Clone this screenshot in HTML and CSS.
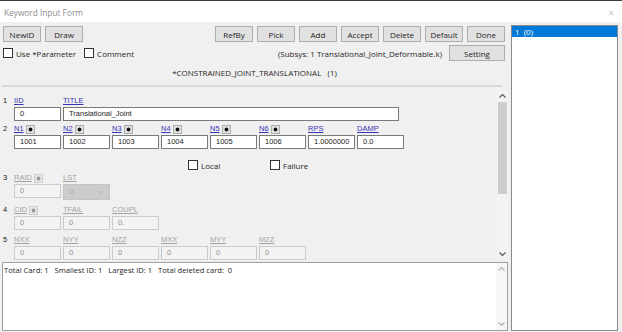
FILE: index.html
```html
<!DOCTYPE html>
<html>
<head>
<meta charset="utf-8">
<title>Keyword Input Form</title>
<link rel="stylesheet" href="styles.css">
</head>
<body>
<div class="window">
  <div class="titlebar">
    <span class="title">Keyword Input Form</span>
    <span class="close">&#x2715;</span>
  </div>
  <div class="body">
    <div class="main">
      <div class="toolbar">
        <span class="btn">NewID</span>
        <span class="btn">Draw</span>
        <span class="spacer"></span>
        <span class="btn">RefBy</span>
        <span class="btn">Pick</span>
        <span class="btn">Add</span>
        <span class="btn">Accept</span>
        <span class="btn">Delete</span>
        <span class="btn">Default</span>
        <span class="btn">Done</span>
      </div>
      <div class="options">
        <span class="chk"><span class="box"></span>Use *Parameter</span>
        <span class="chk"><span class="box"></span>Comment</span>
        <span class="spacer"></span>
        <span class="subsys">(Subsys: 1 Translational_Joint_Deformable.k)</span>
        <span class="btn setting">Setting</span>
      </div>
      <div class="heading">*CONSTRAINED_JOINT_TRANSLATIONAL&nbsp;&nbsp;&nbsp;(1)</div>
      <div class="sep"></div>
      <div class="panel">
        <div class="cards">
          <div class="card first">
            <span class="num">1</span>
            <div class="cell"><span class="lbl">IID</span><span class="fld">0</span></div>
            <div class="cell wide"><span class="lbl">TITLE</span><span class="fld title-fld">Translational_Joint</span></div>
          </div>
          <div class="card">
            <span class="num">2</span>
            <div class="cell"><span class="lbl">N1<span class="dot"></span></span><span class="fld">1001</span></div>
            <div class="cell"><span class="lbl">N2<span class="dot"></span></span><span class="fld">1002</span></div>
            <div class="cell"><span class="lbl">N3<span class="dot"></span></span><span class="fld">1003</span></div>
            <div class="cell"><span class="lbl">N4<span class="dot"></span></span><span class="fld">1004</span></div>
            <div class="cell"><span class="lbl">N5<span class="dot"></span></span><span class="fld">1005</span></div>
            <div class="cell"><span class="lbl">N6<span class="dot"></span></span><span class="fld">1006</span></div>
            <div class="cell"><span class="lbl">RPS</span><span class="fld">1.0000000</span></div>
            <div class="cell"><span class="lbl">DAMP</span><span class="fld">0.0</span></div>
          </div>
          <div class="flags">
            <span class="chk"><span class="box"></span>Local</span>
            <span class="chk"><span class="box"></span>Failure</span>
          </div>
          <div class="card dis">
            <span class="num">3</span>
            <div class="cell"><span class="lbl">RAID<span class="dot"></span></span><span class="fld">0</span></div>
            <div class="cell"><span class="lbl">LST</span><span class="fld sel">0<svg class="caret" viewBox="0 0 8 5" width="8" height="5"><polyline points="1,1 4,4 7,1" fill="none" stroke="#b5b5b5" stroke-width="1"/></svg></span></div>
          </div>
          <div class="card dis">
            <span class="num">4</span>
            <div class="cell"><span class="lbl">CID<span class="dot"></span></span><span class="fld">0</span></div>
            <div class="cell"><span class="lbl">TFAIL</span><span class="fld">0</span></div>
            <div class="cell"><span class="lbl">COUPL</span><span class="fld">0.</span></div>
          </div>
          <div class="card dis">
            <span class="num">5</span>
            <div class="cell"><span class="lbl">NXX</span><span class="fld">0</span></div>
            <div class="cell"><span class="lbl">NYY</span><span class="fld">0</span></div>
            <div class="cell"><span class="lbl">NZZ</span><span class="fld">0</span></div>
            <div class="cell"><span class="lbl">MXX</span><span class="fld">0</span></div>
            <div class="cell"><span class="lbl">MYY</span><span class="fld">0</span></div>
            <div class="cell"><span class="lbl">MZZ</span><span class="fld">0</span></div>
          </div>
        </div>
        <div class="vscroll">
          <span class="arrow"><svg viewBox="0 0 7 4" width="7" height="4"><polyline points="0.5,3.5 3.5,0.5 6.5,3.5" fill="none" stroke="#555" stroke-width="1.1"/></svg></span>
          <span class="thumb"></span>
          <span class="track"></span>
          <span class="arrow"><svg viewBox="0 0 7 4" width="7" height="4"><polyline points="0.5,0.5 3.5,3.5 6.5,0.5" fill="none" stroke="#555" stroke-width="1.1"/></svg></span>
        </div>
      </div>
      <div class="log">
        <div class="logtext">Total Card: 1   Smallest ID: 1   Largest ID: 1   Total deleted card:  0</div>
        <div class="vscroll light">
          <span class="arrow"><svg viewBox="0 0 7 4" width="7" height="4"><polyline points="0.5,3.5 3.5,0.5 6.5,3.5" fill="none" stroke="#b0b0b0" stroke-width="1.1"/></svg></span>
          <span class="track"></span>
          <span class="arrow"><svg viewBox="0 0 7 4" width="7" height="4"><polyline points="0.5,0.5 3.5,3.5 6.5,0.5" fill="none" stroke="#b0b0b0" stroke-width="1.1"/></svg></span>
        </div>
      </div>
    </div>
    <div class="side">
      <div class="listbox">
        <div class="item selected">1&nbsp;&nbsp;(0)</div>
      </div>
    </div>
  </div>
</div>
</body>
</html>
```

FILE: styles.css
```css
* { box-sizing: border-box; }
html, body { margin: 0; padding: 0; background: #ffffff; }
body { font-family: "Open Sans", "Liberation Sans", sans-serif; font-size: 8px; color: #1e1e1e; }

.window { width: 622px; height: 332px; overflow: hidden; display: flex; flex-direction: column; border-top: 1px solid #3a3a3a; }

.titlebar { height: 21px; flex: none; background: #fff; display: flex; align-items: center; justify-content: space-between; padding: 1px 7px 0 4px; }
.title { color: #8c8c8c; font-size: 8.3px; }
.close { color: #c8c8c8; font-size: 8px; }

.body { flex: 1; background: #f0f0f0; display: flex; min-height: 0; }

.main { width: 509px; flex: none; display: flex; flex-direction: column; }

.toolbar { display: flex; gap: 4px; padding: 4px 4px 0 3px; height: 20px; }
.spacer { flex: 1; }
.btn { width: 38px; height: 16px; background: #e1e1e1; border: 1px solid #adadad; display: flex; align-items: center; justify-content: center; font-size: 8px; }

.options { display: flex; align-items: center; padding: 0 4px 0 3px; margin-top: 3px; height: 16px; }
.chk { display: flex; align-items: center; margin-right: 8px; }
.box { width: 10px; height: 10px; background: #fff; border: 1px solid #333; margin-right: 3px; }
.subsys { margin-right: 7px; }
.btn.setting { width: 56px; }

.heading { text-align: center; margin-top: 5px; line-height: 14px; height: 14px; }

.sep { margin: 5px 7px 0 2px; height: 2px; background: #d9d9d9; }

.panel { height: 174px; flex: none; display: flex; overflow: hidden; }
.cards { flex: 1; padding-top: 8px; font-family: "Liberation Sans", Arial, sans-serif; font-size: 7.5px; }

.card { display: flex; margin-bottom: 4px; }
.card.first { margin-bottom: 2px; }
.num { width: 14px; padding-left: 3px; line-height: 12px; color: #222; }
.cell { width: 49px; display: flex; flex-direction: column; }
.cell.wide { width: 340px; }
.lbl { height: 12px; line-height: 12px; color: #3535b5; text-decoration: underline; display: flex; align-items: center; }
.dot { width: 9px; height: 9px; margin-left: 2px; background: radial-gradient(circle, #111 1.6px, #e1e1e1 2.3px); border: 1px solid #adadad; }
.fld { width: 47px; height: 14px; border: 1px solid #7a7a7a; background: #fff; padding-left: 5px; line-height: 12px; white-space: nowrap; overflow: hidden; }
.title-fld { width: 336px; }

.flags { display: flex; padding-left: 188px; margin: 10px 0 1px; height: 12px; font-family: "Open Sans", "Liberation Sans", sans-serif; font-size: 8px; }
.flags .chk { margin-right: 0; width: 82px; }

.dis .lbl { color: #a3a3a3; }
.dis .dot { background: radial-gradient(circle, #9a9a9a 1.6px, #e6e6e6 2.3px); border-color: #cfcfcf; }
.dis .fld { background: #f3f3f3; border-color: #cbcbcb; color: #8f8f8f; }
.dis .fld.sel { height: 16px; background: #cccccc; border-color: #c4c4c4; color: #a5a5a5; display: flex; align-items: center; justify-content: space-between; padding-right: 4px; line-height: 14px; }

.vscroll { width: 11px; margin: 3px 1px 1px 0; display: flex; flex-direction: column; background: #f3f3f3; }
.arrow { height: 12px; display: flex; align-items: center; justify-content: center; flex: none; }
.thumb { height: 92px; background: #cdcdcd; margin: 0 1px; flex: none; }
.track { flex: 1; }

.log { height: 69px; margin: 1px 0 0 2px; width: 506px; border: 1px solid #a0a0a0; background: #fff; display: flex; }
.logtext { flex: 1; white-space: pre; padding: 2px 0 0 1px; line-height: 11px; font-size: 7.6px; }
.vscroll.light { margin: 0; background: #f7f7f7; }

.side { padding: 3px 0 1px 2px; }
.listbox { width: 107px; height: 306px; background: #fff; border: 1px solid #8a8a8a; }
.item { height: 11px; line-height: 11px; padding-left: 3px; font-size: 8px; }
.item.selected { background: #0078d7; color: #fff; }
```
